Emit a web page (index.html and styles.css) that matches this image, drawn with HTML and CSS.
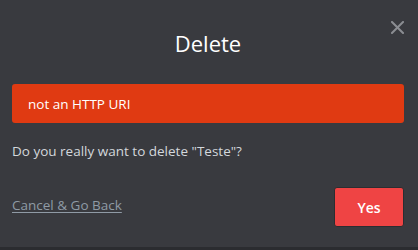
FILE: index.html
```html
<!DOCTYPE html>
<html>
<head>
<meta charset="utf-8">
<link rel="stylesheet" href="styles.css">
</head>
<body>
<div class="dialog">
  <button class="close" aria-label="Close">
    <svg width="13" height="13" viewBox="0 0 13 13"><path d="M1 1L12 12M12 1L1 12" stroke="#8b8d92" stroke-width="2" stroke-linecap="square" fill="none"/></svg>
  </button>
  <h1 class="title">Delete</h1>
  <div class="error">not an HTTP URI</div>
  <p class="message">Do you really want to delete "Teste"?</p>
  <div class="footer">
    <a class="cancel" href="#">Cancel &amp; Go Back</a>
    <button class="yes">Yes</button>
  </div>
</div>
</body>
</html>
```
FILE: styles.css
```css
html, body {
  margin: 0;
  padding: 0;
  background: #2b2c30;
}
body {
  font-family: "Open Sans", "Noto Sans", sans-serif;
  width: 418px;
  height: 250px;
  overflow: hidden;
}
.dialog {
  position: relative;
  box-sizing: border-box;
  height: 247px;
  background: #393a3f;
  padding: 0 14px 0 12px;
  display: flex;
  flex-direction: column;
}
.close {
  position: absolute;
  top: 21px;
  right: 14px;
  width: 13px;
  height: 13px;
  padding: 0;
  border: 0;
  background: none;
  display: block;
}
.close svg { display: block; }
.title {
  margin: 29px 0 0;
  text-align: center;
  font-size: 22px;
  font-weight: 500;
  line-height: 28px;
  color: #ffffff;
}
.error {
  margin-top: 27px;
  height: 39px;
  border-radius: 3px;
  background: #e03a12;
  color: #ffffff;
  font-size: 13.5px;
  font-weight: 500;
  display: flex;
  align-items: center;
  padding: 0 16px;
}
.message {
  margin: 18px 0 0;
  font-size: 13.5px;
  line-height: 20px;
  color: #d3d7dc;
}
.footer {
  margin-top: 26px;
  display: flex;
  justify-content: space-between;
  align-items: center;
}
.cancel {
  color: #8f9aa5;
  font-size: 13.5px;
  text-decoration: underline;
  text-underline-offset: 2px;
  margin-bottom: 5px;
}
.yes {
  width: 70px;
  height: 40px;
  border: 1px solid #2c2d31;
  border-radius: 3px;
  background: #ef4444;
  color: #ffffff;
  font-family: inherit;
  font-size: 14px;
  font-weight: 600;
  padding: 0;
}
```
